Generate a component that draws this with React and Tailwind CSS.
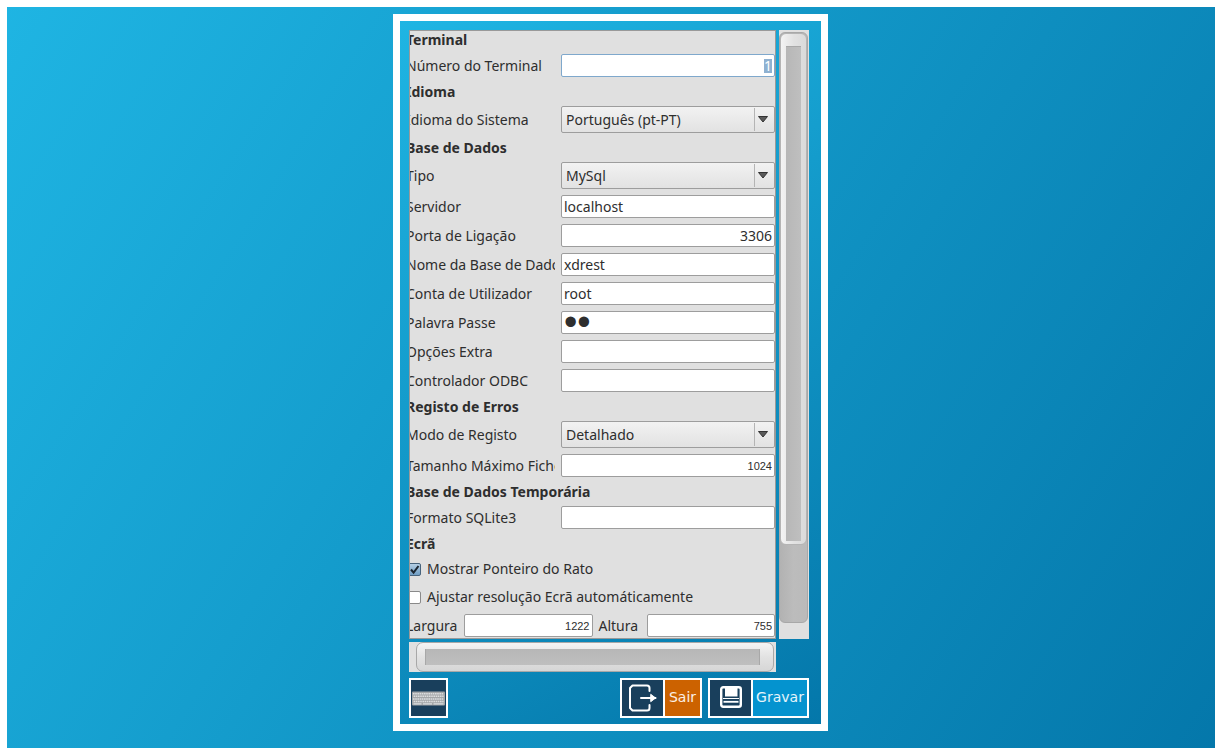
import React, { useState } from 'react';
import clsx from 'clsx';

const ENTRY = 'h-[23px] w-full min-w-0 rounded-[2px] border border-[#9d9d9d] bg-white px-0.5 text-[#2e2e2e] outline-none';

const SectionTitle = ({ children }) => (
  <h2 className="h-[17px] text-sm leading-[17px] font-bold whitespace-nowrap">{children}</h2>
);

const Row = ({ id, label, children }) => (
  <div className="grid grid-cols-[149px_minmax(0,1fr)] items-center gap-1.5">
    <label htmlFor={id} className="overflow-hidden text-sm leading-5 whitespace-nowrap">
      {label}
    </label>
    {children}
  </div>
);

const TextRow = ({ id, label, value, onChange, type = 'text', className = 'text-sm' }) => (
  <Row id={id} label={label}>
    <input
      id={id}
      type={type}
      value={value}
      onChange={(e) => onChange(id, e.target.value)}
      className={clsx(ENTRY, className)}
    />
  </Row>
);

const SelectRow = ({ id, label, value, options, onChange }) => (
  <Row id={id} label={label}>
    <div className="relative">
      <select
        id={id}
        value={value}
        onChange={(e) => onChange(id, e.target.value)}
        className="block h-[27px] w-full appearance-none rounded-[2px] border border-[#9d9d9d] bg-linear-to-b from-[#f2f2f2] to-[#e2e2e2] pr-6 pl-1 text-sm text-[#2e2e2e] outline-none"
      >
        {options.map((o) => (
          <option key={o}>{o}</option>
        ))}
      </select>
      <span className="pointer-events-none absolute inset-y-0.5 right-0 flex w-[21px] items-center border-l border-[#b4b4b4] pl-[3px]">
        <svg width="10" height="7" viewBox="0 0 10 7">
          <path d="M0.5 0.5h9L5 6z" fill="#5a5a5a" stroke="#333" strokeWidth="1" />
        </svg>
      </span>
    </div>
  </Row>
);

const CheckRow = ({ id, label, checked, onChange }) => (
  <div className="flex h-[22px] items-center gap-1.5">
    <span className="relative flex">
      <input
        id={id}
        type="checkbox"
        checked={checked}
        onChange={(e) => onChange(id, e.target.checked)}
        className={clsx(
          'h-[13px] w-[15px] appearance-none rounded-[2px] border',
          checked ? 'border-[#47637c] bg-linear-to-b from-[#b5cfe4] to-[#6f9dc4]' : 'border-[#8a8a8a] bg-white'
        )}
      />
      {checked && (
        <svg className="pointer-events-none absolute inset-y-0 right-0" width="13" height="13" viewBox="0 0 13 13">
          <path d="M3 6.5l2.6 3.2L10.5 3" fill="none" stroke="#1c2630" strokeWidth="2" />
        </svg>
      )}
    </span>
    <label htmlFor={id} className="text-sm leading-5 whitespace-nowrap">
      {label}
    </label>
  </div>
);

// small keyboard picture for the on-screen keyboard button
const KeyboardIcon = () => (
  <svg width="33" height="15" viewBox="0 0 33 15">
    <rect x="0" y="0.5" width="33" height="14" rx="1" fill="#a3a6a8" />
    {[2, 4.6, 7.2, 9.8].map((y, i) => (
      <path key={y} d={`M${1 + (i % 2) * 0.6} ${y + 0.7}H31.6`} stroke="#dcdedf" strokeWidth="1.5" strokeDasharray="1.6 0.6" />
    ))}
    <path d="M1.5 12.9h8M11 12.9h9M21.5 12.9h10" stroke="#dcdedf" strokeWidth="1.4" />
  </svg>
);

const ExitIcon = () => (
  <svg width="29" height="28" viewBox="0 0 29 28" fill="none" stroke="#fff" strokeWidth="2" strokeLinecap="round" strokeLinejoin="round">
    <path d="M21.5 7V4a2.5 2.5 0 0 0-2.5-2.5H4.5L2 4v20l2.5 2.5H19a2.5 2.5 0 0 0 2.5-2.5V21" />
    <path d="M13 14h14.5" />
    <path d="M23 10.5l4.6 3.5-4.6 3.5z" fill="#fff" strokeWidth="1" />
  </svg>
);

const SaveIcon = () => (
  <svg width="22" height="24" viewBox="0 0 22 24">
    <rect x="1.2" y="1.2" width="19.6" height="19.6" rx="2" fill="none" stroke="#fff" strokeWidth="2.4" />
    <path d="M5 1h12.5v9.5H5z" fill="#fff" />
    <path d="M3 12.5h16" stroke="#fff" strokeWidth="1" />
    <path d="M3.5 15.8h15" stroke="#fff" strokeWidth="1.8" />
  </svg>
);

const ActionButton = ({ icon, label, color, width }) => (
  <button type="button" className="flex h-10 border-2 border-white bg-white text-white">
    <span className="mr-0.5 flex h-full w-[41px] items-center justify-center bg-[#193f5c]">{icon}</span>
    <span
      className={clsx(
        "flex h-full items-center justify-center pb-0.5 font-['DejaVu_Sans',sans-serif] text-sm text-white/90",
        color,
        width
      )}
    >
      {label}
    </span>
  </button>
);

export default function App() {
  const [config, setConfig] = useState({
    terminal: '1',
    idioma: 'Português (pt-PT)',
    tipo: 'MySql',
    servidor: 'localhost',
    porta: '3306',
    baseDados: 'xdrest',
    conta: 'root',
    senha: 'xd',
    extra: '',
    odbc: '',
    modo: 'Detalhado',
    tamanho: '1024',
    sqlite: '',
    ponteiro: true,
    ajustar: false,
    largura: '1222',
    altura: '755',
  });

  const update = (key, value) => setConfig((prev) => ({ ...prev, [key]: value }));
  const bind = (id) => ({ id, value: config[id], onChange: update });

  return (
    <div className="min-h-screen border-[7px] border-white bg-linear-[122deg] from-[#1fb5e3] to-[#0477aa] bg-origin-border pt-[7px] pr-px font-['Noto_Sans',sans-serif] text-[#2e2e2e]">
      <main className="mx-auto w-full max-w-[435px] border-[7px] border-white bg-linear-[149deg] from-[#1fb5e3] to-[#0477aa] pt-[9px] pr-3 pb-1.5 pl-[9px]">
        <div className="grid grid-cols-[minmax(0,1fr)_30px] gap-[3px]">
          <form className="overflow-hidden border border-[#999] bg-[#e0e0e0] pb-px">
            <div className="-ml-1 flex flex-col gap-1.5">
              <SectionTitle>Terminal</SectionTitle>
              <Row id="terminal" label="Número do Terminal">
                <div className="flex h-[23px] items-center justify-end rounded-[2px] border border-[#7fa8cc] bg-white px-0.5">
                  <input
                    id="terminal"
                    value={config.terminal}
                    onChange={(e) => update('terminal', e.target.value)}
                    className="h-3.5 w-2 bg-[#8fb1d1] text-sm leading-[14px] text-white outline-none"
                  />
                </div>
              </Row>
              <SectionTitle>Idioma</SectionTitle>
              <SelectRow {...bind('idioma')} label="Idioma do Sistema" options={['Português (pt-PT)']} />
              <SectionTitle>Base de Dados</SectionTitle>
              <SelectRow {...bind('tipo')} label="Tipo" options={['MySql']} />
              <TextRow {...bind('servidor')} label="Servidor" />
              <TextRow {...bind('porta')} label="Porta de Ligação" className="text-right text-sm" />
              <TextRow {...bind('baseDados')} label="Nome da Base de Dados" />
              <TextRow {...bind('conta')} label="Conta de Utilizador" />
              <TextRow
                {...bind('senha')}
                label="Palavra Passe"
                type="password"
                className="font-['Liberation_Sans',sans-serif] text-[38px] leading-5"
              />
              <TextRow {...bind('extra')} label="Opções Extra" />
              <TextRow {...bind('odbc')} label="Controlador ODBC" />
              <SectionTitle>Registo de Erros</SectionTitle>
              <SelectRow {...bind('modo')} label="Modo de Registo" options={['Detalhado']} />
              <TextRow
                {...bind('tamanho')}
                label="Tamanho Máximo Ficheiro"
                className="text-right font-['Liberation_Sans',sans-serif] text-[11px]"
              />
              <SectionTitle>Base de Dados Temporária</SectionTitle>
              <TextRow {...bind('sqlite')} label="Formato SQLite3" />
              <SectionTitle>Ecrã</SectionTitle>
              <CheckRow id="ponteiro" label="Mostrar Ponteiro do Rato" checked={config.ponteiro} onChange={update} />
              <CheckRow id="ajustar" label="Ajustar resolução Ecrã automáticamente" checked={config.ajustar} onChange={update} />
              <div className="grid grid-cols-[52px_minmax(0,1fr)_42px_minmax(0,1fr)] items-center gap-1.5 text-sm leading-5">
                <label htmlFor="largura">Largura</label>
                <input
                  id="largura"
                  value={config.largura}
                  onChange={(e) => update('largura', e.target.value)}
                  className={clsx(ENTRY, "text-right font-['Liberation_Sans',sans-serif] text-[11px]")}
                />
                <label htmlFor="altura">Altura</label>
                <input
                  id="altura"
                  value={config.altura}
                  onChange={(e) => update('altura', e.target.value)}
                  className={clsx(ENTRY, "text-right font-['Liberation_Sans',sans-serif] text-[11px]")}
                />
              </div>
            </div>
          </form>

          {/* vertical scrollbar */}
          <div className="flex flex-col bg-[#e0e0e0] pt-0.5 pr-px pb-4">
            <div className="flex grow flex-col rounded-[6px] border border-[#a8a8a8] bg-linear-to-r from-[#b2b2b2] via-[#bcbcbc] to-[#bababa]">
              <div className="flex h-[512px] flex-col rounded-[6px] border border-[#b4b4b4] bg-linear-to-r from-[#f4f4f4] via-[#e2e2e2] to-[#dadada] px-1 pt-3 pb-[3px]">
                <div className="mx-px grow border-t border-[#a8a8a8] bg-linear-to-r from-[#b7b7b7] to-[#bfbfbf]" />
              </div>
            </div>
          </div>

          {/* horizontal scrollbar */}
          <div className="h-[30px] bg-[#e0e0e0] pr-0.5 pl-[7px]">
            <div className="h-full rounded-[7px] border border-[#a8a8a8] bg-linear-to-b from-[#f4f4f4] via-[#e2e2e2] to-[#d6d6d6] py-1.5 pr-[13px] pl-2">
              <div className="h-full border-x border-[#a8a8a8] bg-linear-to-b from-[#b7b7b7] to-[#bfbfbf]" />
            </div>
          </div>
        </div>

        <div className="mt-1.5 flex items-center gap-1.5">
          <button
            type="button"
            aria-label="Teclado"
            className="mr-auto flex h-10 w-[39px] items-center justify-center border-2 border-white bg-[#193f5c]"
          >
            <KeyboardIcon />
          </button>
          <ActionButton icon={<ExitIcon />} label="Sair" color="bg-[#cc6200]" width="w-[35px]" />
          <ActionButton icon={<SaveIcon />} label="Gravar" color="bg-[#0493cf]" width="w-[54px]" />
        </div>
      </main>
    </div>
  );
}
